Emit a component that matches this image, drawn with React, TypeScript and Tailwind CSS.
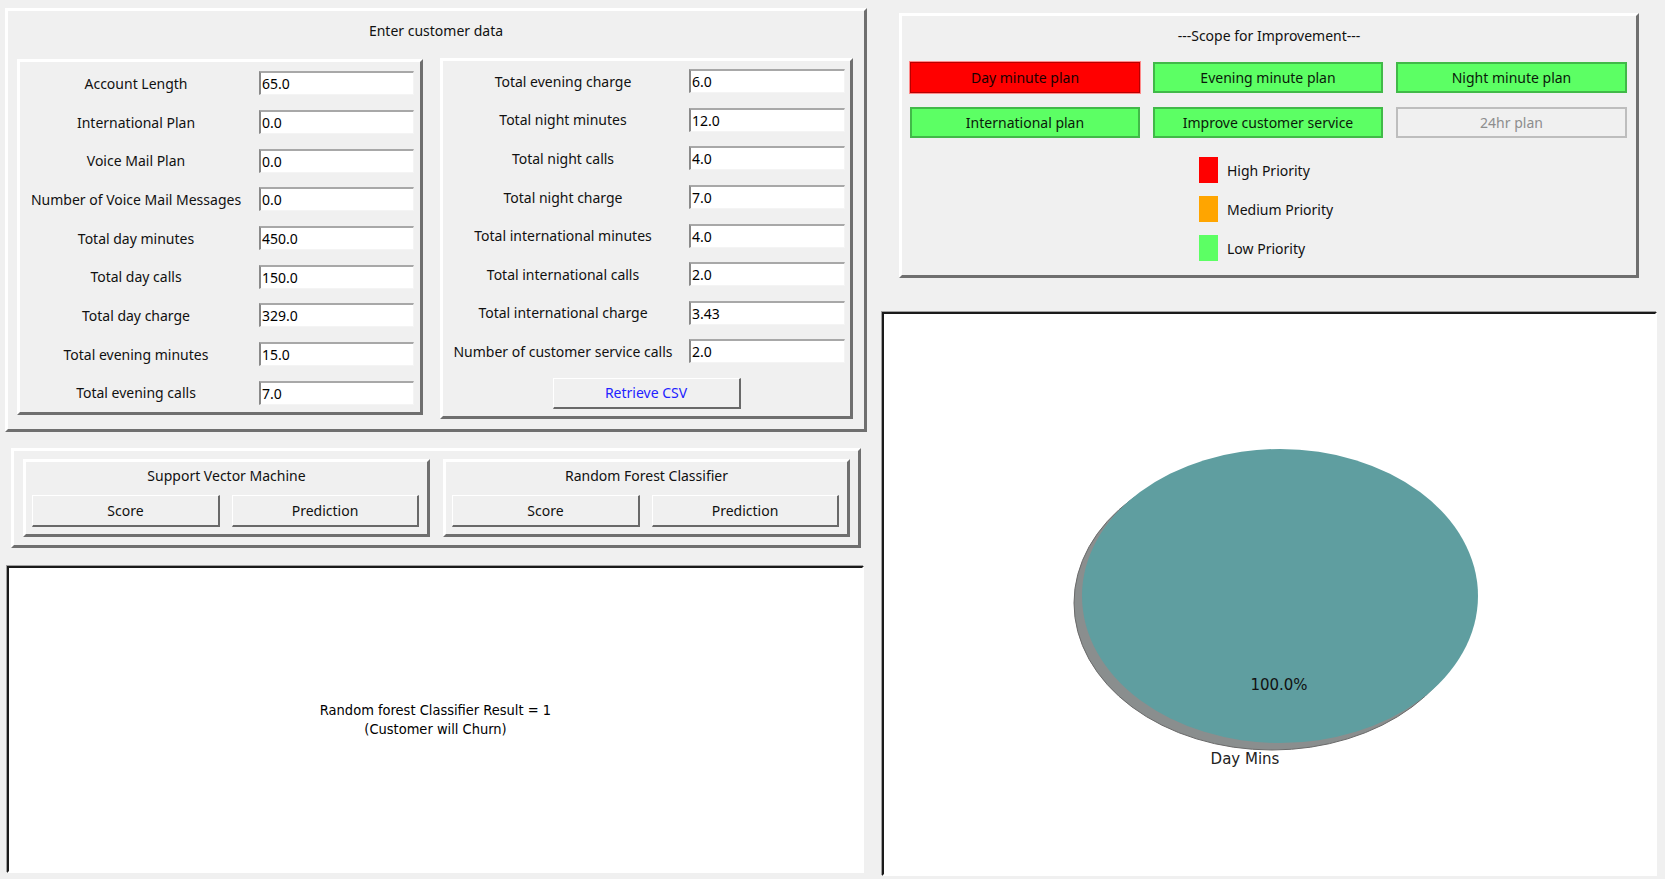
const raised =
  "border-[3px] border-t-white border-l-white border-r-[#6f6f6f] border-b-[#6f6f6f]";
const sunken =
  "border-2 border-t-[#1a1a1a] border-l-[#1a1a1a] border-r-white border-b-white shadow-[-1px_-1px_0_#a0a0a0]";
const tkButton =
  "border-t border-l border-r-2 border-b-2 border-t-white border-l-white border-r-[#696969] border-b-[#696969] bg-[#f0f0f0] flex items-center justify-center";

const leftFields: [string, string][] = [
  ["Account Length", "65.0"],
  ["International Plan", "0.0"],
  ["Voice Mail Plan", "0.0"],
  ["Number of Voice Mail Messages", "0.0"],
  ["Total day minutes", "450.0"],
  ["Total day calls", "150.0"],
  ["Total day charge", "329.0"],
  ["Total evening minutes", "15.0"],
  ["Total evening calls", "7.0"],
];

const rightFields: [string, string][] = [
  ["Total evening charge", "6.0"],
  ["Total night minutes", "12.0"],
  ["Total night calls", "4.0"],
  ["Total night charge", "7.0"],
  ["Total international minutes", "4.0"],
  ["Total international calls", "2.0"],
  ["Total international charge", "3.43"],
  ["Number of customer service calls", "2.0"],
];

function Entry({ value, width }: { value: string; width: string }) {
  return (
    <div
      className={`${width} h-[24px] bg-white border-t-2 border-l-2 border-t-[#a8a8a8] border-l-[#8a8a8a] border-r border-b border-r-[#f4f4f4] border-b-[#f4f4f4] pl-[1px] leading-[21px] text-[14px] text-black`}
    >
      {value}
    </div>
  );
}

function ModelBox({ title }: { title: string }) {
  return (
    <div className={`${raised} w-[407px] h-[78px]`}>
      <div className="pt-[4px] leading-[20px] text-center">{title}</div>
      <div className="mt-[9px] pl-[6px] flex gap-[12px]">
        <div className={`${tkButton} w-[188px] h-[32px]`}>Score</div>
        <div className={`${tkButton} w-[187px] h-[32px]`}>Prediction</div>
      </div>
    </div>
  );
}

const plans: { label: string; kind: "high" | "low" | "off" }[] = [
  { label: "Day minute plan", kind: "high" },
  { label: "Evening minute plan", kind: "low" },
  { label: "Night minute plan", kind: "low" },
  { label: "International plan", kind: "low" },
  { label: "Improve customer service", kind: "low" },
  { label: "24hr plan", kind: "off" },
];

const planStyle = {
  high: "bg-[#ff0000] border border-[#b80000] shadow-[0_0_0_1px_#ff8a8a] text-[#1a0000]",
  low: "bg-[#5cff64] border-2 border-[#41b948] text-[#0a1a0a]",
  off: "bg-[#f0f0f0] border-2 border-[#bdbdbd] text-[#8d8d8d]",
};

export default function App() {
  return (
    <div
      className="w-[1665px] h-[879px] bg-[#f0f0f0] flex text-[14px] text-[#111] overflow-hidden"
      style={{ fontFamily: '"Noto Sans", "Open Sans", sans-serif' }}
    >
      {/* left column */}
      <div className="w-[870px] flex flex-col shrink-0">
        {/* input section */}
        <div className={`${raised} mt-[8px] ml-[5px] w-[862px] h-[424px]`}>
          <div className="h-[47px] pt-[10px] leading-[20px] text-center">Enter customer data</div>
          <div className="flex items-start gap-[17px] pl-[9px]">
            <div className={`${raised} mt-[1px] w-[406px] h-[356px] pt-[2px]`}>
              {leftFields.map(([label, value]) => (
                <div key={label} className="h-[38.7px] flex items-center">
                  <div className="w-[232px] text-center">{label}</div>
                  <div className="ml-[7px]">
                    <Entry value={value} width="w-[155px]" />
                  </div>
                </div>
              ))}
            </div>
            <div className={`${raised} w-[413px] h-[361px] pt-[1px]`}>
              {rightFields.map(([label, value]) => (
                <div key={label} className="h-[38.6px] flex items-center">
                  <div className="w-[240px] text-center">{label}</div>
                  <div className="ml-[6px]">
                    <Entry value={value} width="w-[156px]" />
                  </div>
                </div>
              ))}
              <div className={`${tkButton} mx-auto mt-[7px] w-[188px] h-[31px] text-[#2222ff]`}>
                Retrieve CSV
              </div>
            </div>
          </div>
        </div>

        {/* models */}
        <div className={`${raised} mt-[16px] ml-[11px] w-[850px] h-[100px] pl-[9px] pt-[8px] flex gap-[13px]`}>
          <ModelBox title="Support Vector Machine" />
          <ModelBox title="Random Forest Classifier" />
        </div>

        {/* result canvas */}
        <div
          className={`${sunken} mt-[18px] ml-[7px] w-[857px] h-[307px] bg-white flex flex-col items-center justify-center text-[14.5px] leading-[19px] text-black`}
          style={{ fontFamily: '"DejaVu Sans Condensed", "Liberation Sans Narrow", sans-serif' }}
        >
          <div>Random forest Classifier Result = 1</div>
          <div>(Customer will Churn)</div>
        </div>
      </div>

      {/* right column */}
      <div className="flex flex-col">
        <div className={`${raised} mt-[13px] ml-[29px] w-[740px] h-[265px]`}>
          <div className="pt-[10px] leading-[20px] text-center">---Scope for Improvement---</div>
          <div className="mt-[16px] pl-[8px] grid grid-cols-[230px_230px_231px] gap-x-[13px] gap-y-[14px]">
            {plans.map((p) => (
              <div key={p.label} className={`${planStyle[p.kind]} h-[31px] flex items-center justify-center`}>
                {p.label}
              </div>
            ))}
          </div>
          <div className="mt-[19px] pl-[297px] flex flex-col gap-[13px]">
            {[
              ["High Priority", "bg-[#ff0000]"],
              ["Medium Priority", "bg-[#ffa500]"],
              ["Low Priority", "bg-[#5cff64]"],
            ].map(([label, color]) => (
              <div key={label} className="flex items-center h-[26px]">
                <div className={`${color} w-[19px] h-[26px]`} />
                <div className="ml-[9px]">{label}</div>
              </div>
            ))}
          </div>
        </div>

        <div className={`${sunken} mt-[34px] ml-[12px] w-[775px] h-[564px] bg-white`}>
          <svg width="771" height="560" viewBox="0 0 771 560">
            <ellipse cx="388" cy="289" rx="198" ry="147" fill="#8a8e8e" stroke="#6a6a6a" strokeWidth="1" />
            <ellipse cx="396" cy="282" rx="198" ry="147" fill="#5f9ea0" />
            <text
              x="395"
              y="376"
              textAnchor="middle"
              fontSize="15"
              fill="#111"
              style={{ fontFamily: '"DejaVu Sans", sans-serif' }}
            >
              100.0%
            </text>
            <text
              x="361"
              y="450"
              textAnchor="middle"
              fontSize="15"
              fill="#222"
              style={{ fontFamily: '"DejaVu Sans", sans-serif' }}
            >
              Day Mins
            </text>
          </svg>
        </div>
      </div>
    </div>
  );
}
